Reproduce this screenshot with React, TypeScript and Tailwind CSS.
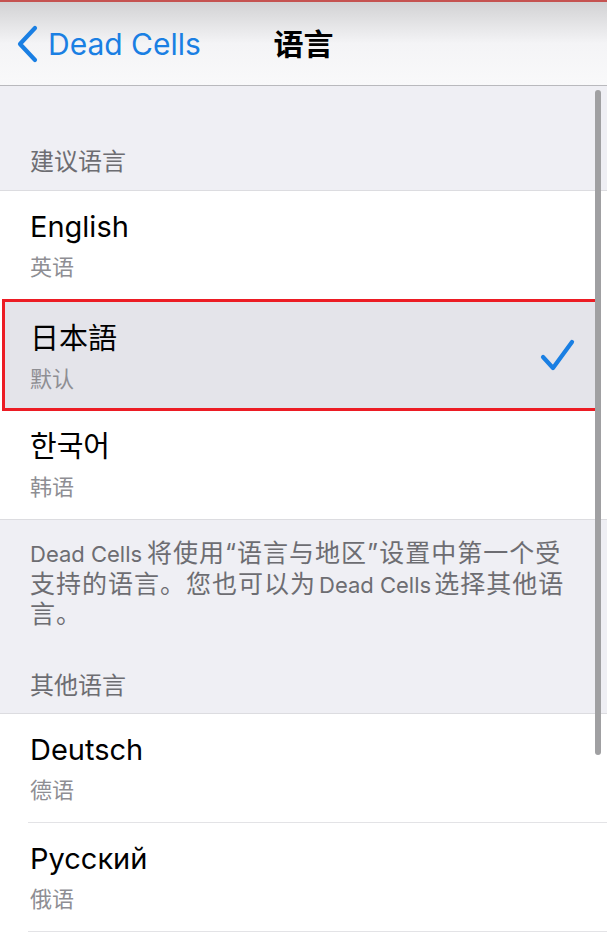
const FONT = { fontFamily: '"Inter", "Noto Sans CJK SC", "Noto Sans CJK KR", sans-serif' };

type Lang = { name: string; sub: string; selected?: boolean };

const suggested: Lang[] = [
  { name: "English", sub: "英语" },
  { name: "日本語", sub: "默认", selected: true },
  { name: "한국어", sub: "韩语" },
];

const others: Lang[] = [
  { name: "Deutsch", sub: "德语" },
  { name: "Русский", sub: "俄语" },
];

function Labels({ lang }: { lang: Lang }) {
  return (
    <div>
      <div className="text-[29px] leading-[34px] text-black">{lang.name}</div>
      <div className="mt-[9px] text-[22px] leading-[28px] text-[#8e8e93]">{lang.sub}</div>
    </div>
  );
}

function Row({ lang, h, line }: { lang: Lang; h: string; line?: boolean }) {
  if (lang.selected) {
    return (
      <div className="ml-[2px] w-[596px] h-[112px] border-[3px] border-[#ec1c24] bg-[#e4e4ea] flex pl-[25px] pr-[20px] pt-[20px]">
        <div className="flex-1">
          <Labels lang={lang} />
        </div>
        <svg className="self-center -mt-[20px]" width="36" height="34" viewBox="0 0 36 34" fill="none">
          <path d="M4 19 L14 30 L33 4" stroke="#1a7fe3" strokeWidth="4.2" strokeLinecap="round" strokeLinejoin="round" />
        </svg>
      </div>
    );
  }
  return (
    <div className={`pl-[28px] flex ${h}`}>
      <div className={`flex-1 pl-[2px] pt-[19px] ${line ? "border-b border-[#e3e3e6]" : ""}`}>
        <Labels lang={lang} />
      </div>
    </div>
  );
}

export default function App() {
  return (
    <div className="w-[607px] h-[933px] overflow-hidden relative bg-[#efeff4] flex flex-col" style={FONT}>
      <div className="h-[2px] bg-[#c55351]" />
      <div className="h-[84px] grid grid-cols-[1fr_auto_1fr] items-center bg-gradient-to-b from-[#d2d2d4] via-[#f4f4f6] to-[#f9f9fa] border-b border-[#b9b9bd]">
        <div className="flex items-center pl-[15px] gap-[9px] text-[#1a7fe3]">
          <svg width="24" height="38" viewBox="0 0 24 38" fill="none">
            <path d="M20 3 L5 19 L20 35" stroke="currentColor" strokeWidth="4.2" strokeLinecap="round" strokeLinejoin="round" />
          </svg>
          <span className="text-[30px] leading-none">Dead Cells</span>
        </div>
        <div className="text-[30px] font-bold text-black leading-none">语言</div>
        <div />
      </div>

      <div className="h-[104px] flex items-end pb-[13px] pl-[30px] text-[24px] leading-[30px] text-[#6d6d72]">建议语言</div>
      <div className="bg-white border-y border-[#dcdce0]">
        <Row lang={suggested[0]} h="h-[108px]" />
        <Row lang={suggested[1]} h="" />
        <Row lang={suggested[2]} h="h-[108px]" />
      </div>

      <div className="h-[111px] pl-[30px] pt-[18px] text-[25px] leading-[30.5px] tracking-[1px] text-[#6d6d72]">
        <span className="text-[22px] leading-none tracking-normal mr-[5px]">Dead Cells</span>将使用“语言与地区”设置中第一个受
        <br />
        支持的语言。您也可以为<span className="text-[22px] leading-none tracking-normal mx-[3px]">Dead Cells</span>选择其他语
        <br />
        言。
      </div>
      <div className="h-[82px] flex items-end pb-[12px] pl-[30px] text-[24px] leading-[30px] text-[#6d6d72]">其他语言</div>
      <div className="bg-white border-t border-[#dcdce0] flex-1">
        {others.map((l) => (
          <Row key={l.name} lang={l} h="h-[109px]" line />
        ))}
      </div>

      <div className="absolute left-[595px] top-[90px] w-[6px] h-[665px] rounded-full bg-[#a0a0a2]" />
    </div>
  );
}
